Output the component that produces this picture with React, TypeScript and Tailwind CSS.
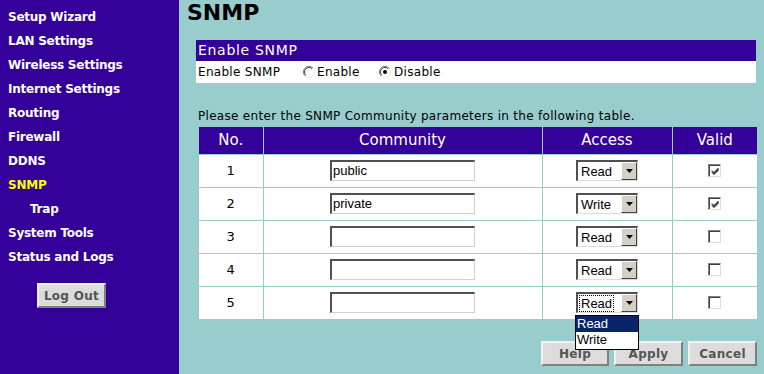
import React from "react";

const menu = [
  { t: "Setup Wizard" },
  { t: "LAN Settings" },
  { t: "Wireless Settings" },
  { t: "Internet Settings" },
  { t: "Routing" },
  { t: "Firewall" },
  { t: "DDNS" },
  { t: "SNMP", active: true },
  { t: "Trap", sub: true },
  { t: "System Tools" },
  { t: "Status and Logs" },
];

const rows = [
  { n: 1, c: "public", a: "Read", v: true },
  { n: 2, c: "private", a: "Write", v: true },
  { n: 3, c: "", a: "Read", v: false },
  { n: 4, c: "", a: "Read", v: false },
  { n: 5, c: "", a: "Read", v: false, focus: true },
];

function Radio({ checked }: { checked?: boolean }) {
  return (
    <svg width="12" height="12" viewBox="0 0 12 12" className="block">
      <circle cx="6" cy="6" r="5.5" fill="#fff" />
      <path d="M10 2 A5.5 5.5 0 0 0 2 10" fill="none" stroke="#808080" strokeWidth="1" />
      <path d="M9.2 2.8 A4.5 4.5 0 0 0 2.8 9.2" fill="none" stroke="#404040" strokeWidth="1" />
      <path d="M2 10 A5.5 5.5 0 0 0 10 2" fill="none" stroke="#e8e8e8" strokeWidth="1" />
      {checked && <circle cx="6" cy="6" r="2" fill="#000" />}
    </svg>
  );
}

function Check({ checked }: { checked: boolean }) {
  return (
    <div className="w-[13px] h-[13px] border-t border-l border-t-[#808080] border-l-[#808080] border-b border-r border-b-[#e0ddd6] border-r-[#e0ddd6] bg-white">
      <div className="w-full h-full border-t border-l border-t-[#404040] border-l-[#404040] relative">
        {checked && (
          <svg width="9" height="9" viewBox="0 0 9 9" className="absolute left-[1px] top-[1px]">
            <path d="M1 3.5 L3 5.5 L7.5 1 M1 4.5 L3 6.5 L7.5 2 M1 5.5 L3 7.5 L7.5 3" stroke="#000" strokeWidth="1" fill="none" />
          </svg>
        )}
      </div>
    </div>
  );
}

function Select({ value, focus }: { value: string; focus?: boolean }) {
  return (
    <div className="w-[62px] h-[21px] border-t-2 border-l-2 border-t-[#505050] border-l-[#505050] border-b border-r border-b-[#e0ddd6] border-r-[#e0ddd6] bg-white flex">
      <div className="flex-1 flex items-center pl-[2px]">
        <span
          className={
            "text-[13px] leading-[15px] px-[1px] text-black " +
            (focus ? "outline outline-1 outline-dotted outline-black" : "")
          }
          style={{ fontFamily: "'Liberation Sans', Arial, sans-serif" }}
        >
          {value}
        </span>
      </div>
      <div className="w-[16px] h-full bg-[#d4d0c8] border-t border-l border-t-white border-l-white border-b border-r border-b-[#404040] border-r-[#404040] flex items-center justify-center">
        <svg width="7" height="4" viewBox="0 0 7 4">
          <path d="M0 0 H7 L3.5 4 Z" fill="#000" />
        </svg>
      </div>
    </div>
  );
}

function Btn({ label, w }: { label: string; w: string }) {
  return (
    <div
      className={
        w +
        " h-[25px] bg-[#dcdcdc] border-t-2 border-l-2 border-t-[#f0f0f0] border-l-[#f0f0f0] border-b-2 border-r-2 border-b-[#808080] border-r-[#808080] flex items-center justify-center text-[12px] font-bold text-[#555555] tracking-[0.3px]"
      }
    >
      {label}
    </div>
  );
}

export default function App() {
  return (
    <div
      className="w-[764px] h-[374px] flex overflow-hidden"
      style={{ fontFamily: "'DejaVu Sans', Verdana, sans-serif" }}
    >
      <div className="w-[179px] h-full bg-[#330099] pt-[5px] pl-[8px]">
        {menu.map((m) => (
          <div
            key={m.t}
            className={
              "h-[24px] leading-[24px] text-[12px] font-bold tracking-[-0.25px] " +
              (m.active ? "text-[#ffff00] " : "text-white ") +
              (m.sub ? "pl-[22px]" : "")
            }
          >
            {m.t}
          </div>
        ))}
        <div className="mt-[14px] ml-[29px] w-[69px] h-[25px] bg-[#dcdcdc] border-t-2 border-l-2 border-t-[#f0f0f0] border-l-[#f0f0f0] border-b-2 border-r-2 border-b-[#808080] border-r-[#808080] flex items-center justify-center text-[12px] font-bold text-[#555555] tracking-[0.3px]">
          Log Out
        </div>
      </div>
      <div className="flex-1 bg-[#99cccc] relative">
        <div className="pl-[8px] pt-[0px] h-[26px] text-[22px] font-bold leading-[26px] text-black">SNMP</div>
        <div className="ml-[17px] mt-[14px] w-[560px]">
          <div className="h-[21px] bg-[#330099] text-white text-[14px] leading-[21px] pl-[2px] tracking-[0.7px]">Enable SNMP</div>
          <div className="h-[22px] bg-white flex items-center text-[12px] text-black pl-[2px] tracking-[0.3px]">
            <span className="w-[105px]">Enable SNMP</span>
            <Radio />
            <span className="ml-[2px] w-[62px]">Enable</span>
            <Radio checked />
            <span className="ml-[3px]">Disable</span>
          </div>
        </div>
        <div className="ml-[19px] mt-[26px] text-[12px] leading-[15px] text-black tracking-[0.3px]">
          Please enter the SNMP Community parameters in the following table.
        </div>
        <table className="ml-[20px] mt-[3px] border-collapse w-[558px]">
          <thead>
            <tr className="h-[27px] bg-[#330099] text-white text-[15px]">
              <th className="w-[64px] font-normal border-r border-[#99cccc]">No.</th>
              <th className="w-[279px] font-normal border-r border-[#99cccc]">Community</th>
              <th className="w-[130px] font-normal border-r border-[#99cccc]">Access</th>
              <th className="w-[85px] font-normal">Valid</th>
            </tr>
          </thead>
          <tbody>
            {rows.map((r) => (
              <tr key={r.n} className="h-[33px] bg-white text-[13px] text-black">
                <td className="text-center border-t border-r border-[#99cccc]">{r.n}</td>
                <td className="border-t border-r border-[#99cccc]">
                  <div className="flex justify-center">
                    <div
                      className="w-[145px] h-[21px] border-t-2 border-l-2 border-t-[#505050] border-l-[#505050] border-b border-r border-b-[#d4d0c8] border-r-[#d4d0c8] bg-white text-[13px] leading-[18px] pl-[1px]"
                      style={{ fontFamily: "'Liberation Sans', Arial, sans-serif" }}
                    >
                      {r.c}
                    </div>
                  </div>
                </td>
                <td className="border-t border-r border-[#99cccc]">
                  <div className="flex justify-center">
                    <Select value={r.a} focus={r.focus} />
                  </div>
                </td>
                <td className="border-t border-[#99cccc]">
                  <div className="flex justify-center">
                    <Check checked={r.v} />
                  </div>
                </td>
              </tr>
            ))}
          </tbody>
        </table>
        <div className="absolute left-[396px] top-[315px] w-[64px] h-[35px] bg-white border border-black text-[13px]" style={{ fontFamily: "'Liberation Sans', Arial, sans-serif" }}>
          <div className="h-[16px] leading-[16px] bg-[#0a246a] text-white pl-[1px]">Read</div>
          <div className="h-[16px] leading-[16px] text-black pl-[1px]">Write</div>
        </div>
        <div className="flex justify-end gap-[5px] mt-[22px] w-[578px]">
          <Btn label="Help" w="w-[68px]" />
          <Btn label="Apply" w="w-[69px]" />
          <Btn label="Cancel" w="w-[69px]" />
        </div>
      </div>
    </div>
  );
}
